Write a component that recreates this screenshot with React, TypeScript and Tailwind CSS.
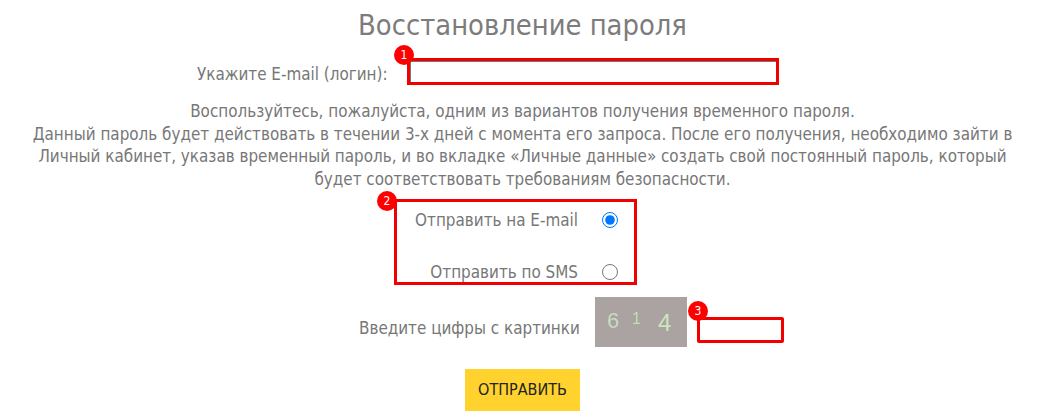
const badge =
  "absolute flex h-[20px] w-[20px] items-center justify-center rounded-full bg-[#ff0000] text-[12px] leading-none text-white";

export default function App() {
  return (
    <div className="h-[416px] w-[1045px] overflow-hidden bg-white font-['DejaVu_Sans_Condensed','DejaVu_Sans',sans-serif] text-[16.9px] text-[#777777]">
      <h1 className="pt-[6px] text-center text-[28.8px] leading-[38px] text-[#7c7c7c]">
        Восстановление пароля
      </h1>

      {/* email */}
      <div className="mt-[14px] flex items-start pl-[197px]">
        <label className="w-[210px] pt-[6px] leading-[21px]">Укажите E-mail (логин):</label>
        <div className="relative">
          <span className={`${badge} left-[-13px] top-[-13px]`}>1</span>
          <input className="block h-[27px] w-[372px] border-[3px] border-[#f00000] bg-white shadow-[inset_1px_1px_0_#767676]" />
        </div>
      </div>

      <p className="mt-[15px] text-center leading-[22.5px]">
        Воспользуйтесь, пожалуйста, одним из вариантов получения временного пароля.
        <br />
        Данный пароль будет действовать в течении 3-х дней с момента его запроса. После его получения, необходимо зайти в
        <br />
        Личный кабинет, указав временный пароль, и во вкладке «Личные данные» создать свой постоянный пароль, который
        <br />
        будет соответствовать требованиям безопасности.
      </p>

      {/* delivery method */}
      <div className="mt-[9px] pl-[394px]">
        <div className="relative flex h-[86px] w-[243px] flex-col gap-[32px] border-[3px] border-[#f00000] pr-[16px] pt-[8px]">
          <span className={`${badge} left-[-20px] top-[-11px]`}>2</span>
          <label className="flex items-center justify-end gap-[24px] leading-[20px]">
            Отправить на E-mail
            <input type="radio" name="send" defaultChecked className="m-0 h-[16px] w-[16px] accent-[#0075ff]" />
          </label>
          <label className="flex items-center justify-end gap-[24px] leading-[20px]">
            Отправить по SMS
            <input type="radio" name="send" className="m-0 h-[16px] w-[16px]" />
          </label>
        </div>
      </div>

      {/* captcha */}
      <div className="mt-[12px] flex pl-[359px]">
        <span className="mt-[19px] w-[236px] leading-[24px]">Введите цифры с картинки</span>
        <svg width="92" height="50" viewBox="0 0 92 50" className="block">
          <rect width="92" height="50" fill="#aba3a1" />
          <g fontFamily="'Liberation Sans', sans-serif" className="blur-[0.5px]">
            <text x="12" y="31" fontSize="22" fill="#c8dcc2">6</text>
            <text x="37" y="27" fontSize="16" fill="#c4dcb8">1</text>
            <text x="63" y="34" fontSize="24" fill="#cce6c0">4</text>
          </g>
        </svg>
        <div className="relative ml-[10px] mt-[20px]">
          <span className={`${badge} left-[-9px] top-[-16px]`}>3</span>
          <input className="block h-[26px] w-[87px] rounded-[2px] border-[3px] border-[#f00000] bg-white" />
        </div>
      </div>

      <div className="mt-[22px] pl-[465px]">
        <button className="h-[42px] w-[115px] bg-[#ffd22e] text-[16px] text-[#222222]">ОТПРАВИТЬ</button>
      </div>
    </div>
  );
}
